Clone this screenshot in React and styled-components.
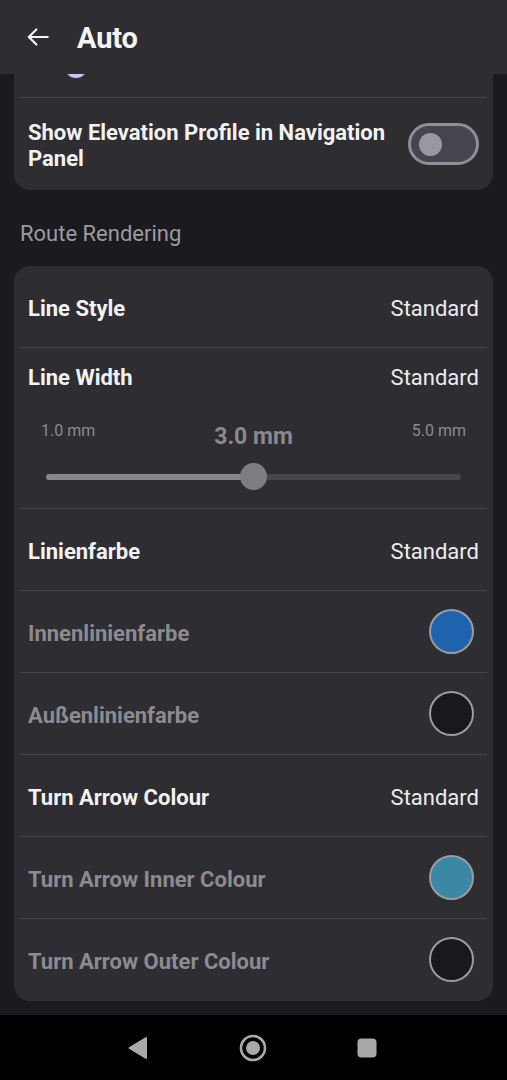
import React from "react";
import styled, { createGlobalStyle } from "styled-components";

const GlobalStyle = createGlobalStyle`
  *, *::before, *::after {
    box-sizing: border-box;
  }
  html, body {
    margin: 0;
    padding: 0;
    background: #1b1a1f;
    font-family: Roboto, "Liberation Sans", sans-serif;
  }
`;

const Screen = styled.div`
  width: 507px;
  height: 1080px;
  display: flex;
  flex-direction: column;
  background: #1b1a1f;
  overflow: hidden;
`;

const TopBar = styled.header`
  height: 74px;
  flex-shrink: 0;
  display: flex;
  align-items: center;
  background: #2e2d32;
  padding-left: 25px;
  gap: 26px;
`;

const Title = styled.h1`
  margin: 0;
  padding-top: 2px;
  font-size: 29px;
  font-weight: 700;
  color: #f4f4f6;
  letter-spacing: -0.2px;
`;

const Content = styled.main`
  flex: 1;
  min-height: 0;
  display: flex;
  flex-direction: column;
  padding: 0 14px;
  overflow: hidden;
`;

const Card = styled.section`
  background: #2e2d32;
  border-radius: ${(p) => (p.$cut ? "0 0 16px 16px" : "16px")};
  display: flex;
  flex-direction: column;
`;

const Sliver = styled.div`
  height: 23px;
  position: relative;
  overflow: hidden;
`;

const HiddenKnob = styled.span`
  position: absolute;
  left: 51px;
  top: -18px;
  width: 22px;
  height: 22px;
  border-radius: 50%;
  background: #c9c6f4;
  box-shadow: 0 0 0 1px #3b3a52;
`;

const Divider = styled.div`
  height: 1px;
  flex-shrink: 0;
  margin: 0 6px;
  background: #47464c;
`;

const Row = styled.div`
  display: flex;
  align-items: center;
  justify-content: space-between;
  min-height: ${(p) => p.$h || 81}px;
  padding: 0 14px;
  gap: 16px;
`;

const Label = styled.span`
  font-size: 22px;
  line-height: 26px;
  padding-top: 4px;
  font-weight: 700;
  color: ${(p) => (p.$dim ? "#8c8b91" : "#f2f2f4")};
`;

const Value = styled.span`
  font-size: 22px;
  line-height: 26px;
  padding-top: 4px;
  color: #ececee;
  white-space: nowrap;
`;

const Toggle = styled.div`
  width: 71px;
  height: 42px;
  flex-shrink: 0;
  border: 3px solid #8f8d97;
  border-radius: 21px;
  background: #46454d;
  display: flex;
  align-items: center;
  padding-left: 8px;
`;

const ToggleThumb = styled.span`
  width: 23px;
  height: 23px;
  border-radius: 50%;
  background: #99979f;
`;

const SectionTitle = styled.h2`
  margin: 0;
  padding: 32px 6px 20px;
  font-size: 22px;
  line-height: 24px;
  font-weight: 400;
  color: #9c9ba1;
`;

const Swatch = styled.span`
  width: 45px;
  height: 45px;
  border-radius: 50%;
  margin-right: 5px;
  margin-bottom: 1px;
  border: 2px solid #9c9aa2;
  background: ${(p) => p.$color};
  flex-shrink: 0;
`;

const WidthBlock = styled.div`
  display: flex;
  flex-direction: column;
  padding: 13px 0 17px;
`;

const WidthHead = styled.div`
  display: flex;
  justify-content: space-between;
  padding: 0 14px;
`;

const Scale = styled.div`
  display: grid;
  grid-template-columns: 1fr auto 1fr;
  align-items: start;
  margin: 30px 27px 0;
`;

const ScaleEnd = styled.span`
  font-size: 16px;
  line-height: 20px;
  color: #8c8b91;
  justify-self: ${(p) => (p.$right ? "end" : "start")};
`;

const ScaleValue = styled.span`
  font-size: 23px;
  line-height: 28px;
  padding-top: 2px;
  font-weight: 700;
  color: #8a898e;
`;

const Slider = styled.div`
  position: relative;
  height: 28px;
  margin: 12px 32px 0;
  display: flex;
  align-items: center;
`;

const Track = styled.div`
  flex: 1;
  height: 6px;
  border-radius: 3px;
  background: #47464c;
  overflow: hidden;
`;

const TrackFill = styled.div`
  height: 100%;
  background: #88878d;
`;

const Thumb = styled.span`
  position: absolute;
  top: 0;
  width: 27px;
  height: 27px;
  margin-left: -13.5px;
  border-radius: 50%;
  background: #7d7c82;
`;

const NavBar = styled.nav`
  height: 65px;
  flex-shrink: 0;
  background: #000;
  display: flex;
  align-items: center;
  justify-content: center;
  gap: 90px;
  padding-right: 4px;
`;

const BackArrow = () => (
  <svg width="26" height="26" viewBox="0 0 24 24" fill="none" stroke="#f4f4f6" strokeWidth="2" strokeLinecap="round" strokeLinejoin="round">
    <path d="M21 12H3.5M10.5 5l-7 7 7 7" />
  </svg>
);

const NavBack = () => (
  <svg width="22" height="24" viewBox="0 0 22 24">
    <path d="M19 2 L19 22 L2.5 12 Z" fill="#a9a9a9" stroke="#a9a9a9" strokeWidth="2" strokeLinejoin="round" />
  </svg>
);

const NavHome = () => (
  <svg width="28" height="28" viewBox="0 0 28 28">
    <circle cx="14" cy="14" r="12" fill="none" stroke="#a9a9a9" strokeWidth="2.6" />
    <circle cx="14" cy="14" r="7" fill="#a9a9a9" />
  </svg>
);

const NavRecent = () => (
  <svg width="20" height="20" viewBox="0 0 20 20">
    <rect x="0.5" y="0.5" width="19" height="19" rx="4" fill="#a9a9a9" />
  </svg>
);

const colourRows = [
  { label: "Linienfarbe", value: "Standard" },
  { label: "Innenlinienfarbe", dim: true, color: "#1f62ae" },
  { label: "Außenlinienfarbe", dim: true, color: "#19181c" },
  { label: "Turn Arrow Colour", value: "Standard" },
  { label: "Turn Arrow Inner Colour", dim: true, color: "#3a88a6" },
  { label: "Turn Arrow Outer Colour", dim: true, color: "#19181c", h: 82 },
];

export default function App() {
  const min = 1;
  const max = 5;
  const width = 3;
  const pct = ((width - min) / (max - min)) * 100;

  return (
    <Screen>
      <GlobalStyle />
      <TopBar>
        <BackArrow />
        <Title>Auto</Title>
      </TopBar>

      <Content>
        <Card $cut>
          <Sliver>
            <HiddenKnob />
          </Sliver>
          <Divider />
          <Row $h={92}>
            <Label>Show Elevation Profile in Navigation Panel</Label>
            <Toggle>
              <ToggleThumb />
            </Toggle>
          </Row>
        </Card>

        <SectionTitle>Route Rendering</SectionTitle>

        <Card>
          <Row>
            <Label>Line Style</Label>
            <Value>Standard</Value>
          </Row>
          <Divider />
          <WidthBlock>
            <WidthHead>
              <Label>Line Width</Label>
              <Value>Standard</Value>
            </WidthHead>
            <Scale>
              <ScaleEnd>1.0 mm</ScaleEnd>
              <ScaleValue>3.0 mm</ScaleValue>
              <ScaleEnd $right>5.0 mm</ScaleEnd>
            </Scale>
            <Slider>
              <Track>
                <TrackFill style={{ width: `${pct}%` }} />
              </Track>
              <Thumb style={{ left: `${pct}%` }} />
            </Slider>
          </WidthBlock>
          {colourRows.map((r) => (
            <React.Fragment key={r.label}>
              <Divider />
              <Row $h={r.h}>
                <Label $dim={r.dim}>{r.label}</Label>
                {r.color ? <Swatch $color={r.color} /> : <Value>{r.value}</Value>}
              </Row>
            </React.Fragment>
          ))}
        </Card>
      </Content>

      <NavBar>
        <NavBack />
        <NavHome />
        <NavRecent />
      </NavBar>
    </Screen>
  );
}
